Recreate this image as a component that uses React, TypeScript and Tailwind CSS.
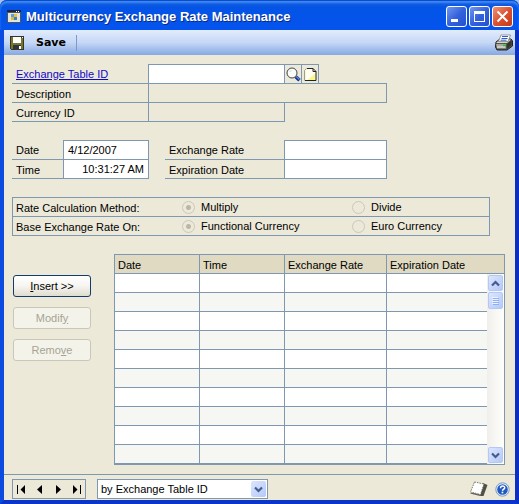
import React from "react";

const line = "border-[#7f98b2]";

function AppIcon() {
  return (
    <svg width="14" height="13" viewBox="0 0 14 13" shapeRendering="crispEdges" aria-hidden="true">
      <rect width="14" height="13" fill="#4a5568" />
      <rect x="1" y="3" width="12" height="9" fill="#e4e4d8" />
      <rect x="0" y="0" width="14" height="2" fill="#1c2440" />
      <rect x="9" y="1" width="1" height="1" fill="#fff" />
      <rect x="11" y="1" width="1" height="1" fill="#fff" />
      <rect x="4" y="4" width="3" height="3" fill="#5aa0d8" />
      <rect x="7" y="4" width="3" height="3" fill="#e8c040" />
      <rect x="4" y="7" width="3" height="3" fill="#d8b840" />
      <rect x="7" y="7" width="3" height="3" fill="#3880c0" />
    </svg>
  );
}

function SaveIcon() {
  return (
    <svg width="14" height="14" viewBox="0 0 14 14" shapeRendering="crispEdges" aria-hidden="true">
      <path d="M0 0h14v14H1L0 13z" fill="#36361c" />
      <path d="M1 1h2v12H1zM11 2h2v11h-2zM2 7h10v2H2z" fill="#75752f" />
      <rect x="3" y="1" width="8" height="6" fill="#fff" />
      <rect x="12" y="1" width="1" height="1" fill="#fff" />
      <rect x="4" y="9" width="7" height="4" fill="#30304a" />
      <rect x="9" y="10" width="2" height="3" fill="#fff" />
    </svg>
  );
}

function PrinterIcon() {
  return (
    <svg width="18" height="17" viewBox="0 0 18 17" aria-hidden="true">
      <path d="M1 8l4-3h11l1.500 2v5L12 16H2l-1.500-3z" fill="#55554f" stroke="#222" />
      <path d="M1 9h11l4-3.500H5z" fill="#d5d5c8" />
      <path d="M1 10h10v4.500H2z" fill="#a8a89c" />
      <path d="M12 10l4.500-3.500V11L12 15z" fill="#33332e" />
      <path d="M6 1h9.500L13 7.500H3.500z" fill="#fff" stroke="#777" strokeWidth=".7" />
      <path d="M7 2.500h6M6.500 4.500h6M5.500 6.200h6" stroke="#315fc4" />
      <path d="M8 11.500h3" stroke="#13c52b" strokeWidth="1.500" />
      <path d="M2 13h8" stroke="#eee" />
    </svg>
  );
}

function LookupIcon() {
  return (
    <svg width="15" height="15" viewBox="0 0 15 15" aria-hidden="true">
      <path d="M9.800 9.800l3.700 3.500" stroke="#12308c" strokeWidth="3.600" />
      <path d="M10.300 9.500l3.200 3" stroke="#5f90e8" strokeWidth="1.200" />
      <circle cx="6" cy="6" r="5" fill="#fbfbf8" stroke="#444" strokeWidth="1" />
      <path d="M3.500 5L5.500 3" stroke="#c8d4e4" />
    </svg>
  );
}

function NoteIcon() {
  return (
    <svg width="13" height="15" viewBox="0 0 13 15" aria-hidden="true">
      <path d="M3.500 1.500H9l3 3v9H1.500V3.500z" fill="#fffef0" />
      <path d="M11.500 6v7.500H3z" fill="#fbf68e" />
      <path d="M.5 13.500v-10l2-2" fill="none" stroke="#a0a088" />
      <path d="M3 1.500h6l3 3v9H1M9 1.500v3h3" fill="none" stroke="#222" strokeWidth="1" />
    </svg>
  );
}

function Chevron({ up = false }: { up?: boolean }) {
  return (
    <svg width="9" height="7" viewBox="0 0 9 7" aria-hidden="true">
      <path d={up ? "M1 5.500L4.500 2L8 5.500" : "M1 1.500L4.500 5L8 1.500"} fill="none" stroke="#445d8c" strokeWidth="2.200" />
    </svg>
  );
}

function NavGlyph({ d }: { d: string }) {
  return (
    <svg width="9" height="9" viewBox="0 0 9 9" aria-hidden="true">
      <path d={d} fill="#000" />
    </svg>
  );
}

const fieldText = "min-w-0 px-1 text-[11px] text-black outline-none";
const labelText = "flex items-center pt-[2px] pl-1";

function WindowButton({ label, close = false, children }: { label: string; close?: boolean; children: React.ReactNode }) {
  return (
    <button
      type="button"
      aria-label={label}
      className={
        "flex size-[21px] items-center justify-center rounded-[3px] border border-white " +
        (close
          ? "bg-linear-to-br from-[#ec9274] via-[#dc5130] to-[#c53a15]"
          : "bg-linear-to-br from-[#7396ee] via-[#3462dd] to-[#2450cf]")
      }
    >
      <svg width="15" height="15" viewBox="0 0 15 15" aria-hidden="true">
        {children}
      </svg>
    </button>
  );
}

function TitleBar() {
  return (
    <header className="flex h-[30px] items-center rounded-t-[7px] bg-linear-to-b from-[#1c62d8] from-0% via-[#0354e6] via-25% to-[#0453ee] pt-[3px] pr-[6px] pl-[7px] shadow-[inset_0_1px_0_#0c4cc8,inset_0_3px_2px_#3c8af8]">
      <AppIcon />
      <h1 className="ml-[5px] flex-1 truncate text-[13px] leading-[18px] font-bold text-white [text-shadow:1px_1px_0_#0b2a80]">
        Multicurrency Exchange Rate Maintenance
      </h1>
      <div className="flex gap-[2px]">
        <WindowButton label="Minimize">
          <rect x="2" y="10" width="7" height="3" fill="#fff" />
        </WindowButton>
        <WindowButton label="Maximize">
          <path d="M2 2h11v11H2zM3 5v7h9V5z" fill="#fff" fillRule="evenodd" />
        </WindowButton>
        <WindowButton label="Close" close>
          <path d="M2.500 2.500l10 10M12.500 2.500l-10 10" stroke="#fff" strokeWidth="2" />
        </WindowButton>
      </div>
    </header>
  );
}

function Toolbar() {
  return (
    <div className="flex h-[25px] items-center bg-linear-to-b from-[#e2ecfc] via-[#c6d8f6] to-[#86a8e2] pr-[2px] pl-[6px]">
      <button type="button" className="flex items-center gap-3 pr-[10px] font-['DejaVu_Sans',sans-serif] text-[11px] font-bold">
        <SaveIcon />
        Save
      </button>
      <span className="h-4 w-px bg-[#7c98cc]" />
      <button type="button" aria-label="Print" className="ml-auto">
        <PrinterIcon />
      </button>
    </div>
  );
}

function TableFields() {
  return (
    <div>
      <div className={`flex h-5 w-[375px] border-b ${line}`}>
        <label htmlFor="tableId" className={`w-[136px] ${labelText}`}>
          <a href="#lookup" className="text-[#1008c8] underline">Exchange Table ID</a>
        </label>
        <input id="tableId" className={`w-[136px] border-t border-l bg-white ${line} ${fieldText}`} />
        <button type="button" aria-label="Look up" className={`flex w-[17px] items-center justify-center border-t border-l ${line}`}>
          <LookupIcon />
        </button>
        <button type="button" aria-label="Note" className={`flex w-[18px] items-center justify-center border-x border-t ${line}`}>
          <NoteIcon />
        </button>
      </div>
      <div className={`flex h-[19px] w-[375px] border-b ${line}`}>
        <label htmlFor="description" className={`w-[136px] ${labelText}`}>Description</label>
        <input id="description" readOnly className={`flex-1 border-x ${line} ${fieldText}`} />
      </div>
      <div className={`flex h-[19px] w-[273px] border-b ${line}`}>
        <label htmlFor="currency" className={`w-[136px] ${labelText}`}>Currency ID</label>
        <input id="currency" readOnly className={`flex-1 border-x ${line} ${fieldText}`} />
      </div>
    </div>
  );
}

function DateFields() {
  return (
    <div className="flex gap-4">
      <div className="w-[137px]">
        <div className={`flex h-5 border-b ${line}`}>
          <label htmlFor="date" className={`w-[51px] ${labelText}`}>Date</label>
          <input id="date" defaultValue="4/12/2007" className={`flex-1 border-x border-t bg-white ${line} ${fieldText}`} />
        </div>
        <div className={`flex h-[19px] border-b ${line}`}>
          <label htmlFor="time" className={`w-[51px] ${labelText}`}>Time</label>
          <input id="time" defaultValue="10:31:27 AM" className={`flex-1 border-x bg-white text-right ${line} ${fieldText}`} />
        </div>
      </div>
      <div className="w-[222px]">
        <div className={`flex h-5 border-b ${line}`}>
          <label htmlFor="rate" className={`w-[119px] ${labelText}`}>Exchange Rate</label>
          <input id="rate" className={`flex-1 border-x border-t bg-white ${line} ${fieldText}`} />
        </div>
        <div className={`flex h-[19px] border-b ${line}`}>
          <label htmlFor="expires" className={`w-[119px] ${labelText}`}>Expiration Date</label>
          <input id="expires" className={`flex-1 border-x bg-white ${line} ${fieldText}`} />
        </div>
      </div>
    </div>
  );
}

function Choice({ name, label, checked = false }: { name: string; label: string; checked?: boolean }) {
  return (
    <label className="flex items-center gap-[6px]">
      <input
        type="radio"
        name={name}
        defaultChecked={checked}
        disabled
        className="size-[13px] appearance-none rounded-full border border-[#cac8bb] checked:bg-[radial-gradient(circle,#b9b7aa_2px,transparent_3px)]"
      />
      {label}
    </label>
  );
}

function RateOptions() {
  const row = "grid grid-cols-[169px_170px_1fr] items-center";
  return (
    <div className={`mr-[15px] border ${line}`}>
      <div role="radiogroup" aria-label="Rate Calculation Method" className={`${row} h-[19px] border-b ${line}`}>
        <span className="pt-[2px] pl-[3px]">Rate Calculation Method:</span>
        <Choice name="method" label="Multiply" checked />
        <Choice name="method" label="Divide" />
      </div>
      <div role="radiogroup" aria-label="Base Exchange Rate On" className={`${row} h-[18px]`}>
        <span className="pt-[2px] pl-[3px]">Base Exchange Rate On:</span>
        <Choice name="base" label="Functional Currency" checked />
        <Choice name="base" label="Euro Currency" />
      </div>
    </div>
  );
}

const scrollButton =
  "flex w-[15px] items-center justify-center rounded-[2px] border border-[#b4c8f6] bg-linear-to-br from-[#dce6fe] to-[#b4c8f8]";

function ScrollBar() {
  return (
    <div className="flex h-[190px] flex-col items-center bg-linear-to-r from-[#f0efeb] to-[#fefefb] py-px">
      <button type="button" aria-label="Scroll up" className={`${scrollButton} h-4`}>
        <Chevron up />
      </button>
      <div className={`${scrollButton} mt-px h-[17px]`}>
        <svg width="7" height="8" viewBox="0 0 7 8" shapeRendering="crispEdges" aria-hidden="true">
          <path d="M0 0h6v1H0zM0 2h6v1H0zM0 4h6v1H0zM0 6h6v1H0z" fill="#eef4fe" />
          <path d="M1 1h6v1H1zM1 3h6v1H1zM1 5h6v1H1zM1 7h6v1H1z" fill="#8cb0f8" />
        </svg>
      </div>
      <button type="button" aria-label="Scroll down" className={`${scrollButton} mt-auto h-4`}>
        <Chevron />
      </button>
    </div>
  );
}

function RateTable() {
  const head = `h-[19px] border-b bg-[#dfdac1] p-0 pt-[2px] pl-[3px] text-left font-normal ${line}`;
  const cell = `h-[19px] border-b p-0 ${line}`;
  return (
    <div className={`flex-1 border ${line}`}>
      <table className="w-full table-fixed border-separate border-spacing-0">
        <colgroup>
          <col className="w-[85px]" />
          <col className="w-[85px]" />
          <col className="w-[102px]" />
          <col />
          <col className="w-[17px]" />
        </colgroup>
        <thead>
          <tr>
            <th className={`${head} border-r`}>Date</th>
            <th className={`${head} border-r`}>Time</th>
            <th className={`${head} border-r`}>Exchange Rate</th>
            <th colSpan={2} className={head}>Expiration Date</th>
          </tr>
        </thead>
        <tbody>
          {Array.from({ length: 10 }, (_, i) => (
            <tr key={i} className="bg-white even:bg-[#f6f6f3]">
              <td className={`${cell} border-r`} />
              <td className={`${cell} border-r`} />
              <td className={`${cell} border-r`} />
              <td className={cell} />
              {i === 0 && (
                <td rowSpan={10} className="p-0 align-top">
                  <ScrollBar />
                </td>
              )}
            </tr>
          ))}
        </tbody>
      </table>
    </div>
  );
}

function Actions() {
  const off = "h-[22px] rounded-[3px] border border-[#c9c7ba] bg-[#f4f3ea] text-[#a5a394]";
  return (
    <div className="ml-px flex w-[78px] flex-col gap-[10px] pt-[21px]">
      <button
        type="button"
        className="h-[22px] rounded-[3px] border border-[#123c6c] bg-linear-to-b from-white via-[#f6f5f0] to-[#dfdccf]"
      >
        <u>I</u>nsert &gt;&gt;
      </button>
      <button type="button" disabled className={off}>
        Modif<u>y</u>
      </button>
      <button type="button" disabled className={off}>
        Remo<u>v</u>e
      </button>
    </div>
  );
}

function StatusBar() {
  return (
    <footer className={`flex items-center border-t pt-1 pr-[5px] pb-px pl-2 ${line}`}>
      <nav aria-label="Records" className={`flex h-5 w-[74px] items-center justify-between border px-1 ${line}`}>
        <button type="button" aria-label="First record"><NavGlyph d="M0 0h1v9H0zM8 0v9L3.500 4.500z" /></button>
        <button type="button" aria-label="Previous record"><NavGlyph d="M7 0v9L2 4.500z" /></button>
        <button type="button" aria-label="Next record"><NavGlyph d="M2 0v9L7 4.500z" /></button>
        <button type="button" aria-label="Last record"><NavGlyph d="M8 0h1v9H8zM1 0v9L5.500 4.500z" /></button>
      </nav>
      <div className="relative ml-[11px]">
        <select aria-label="Sort order" className={`block h-5 w-[171px] appearance-none border bg-white pl-[3px] text-[11px] ${line}`}>
          <option>by Exchange Table ID</option>
        </select>
        <span className="pointer-events-none absolute inset-y-[2px] right-[2px] flex w-[15px] items-center justify-center rounded-[2px] bg-linear-to-br from-[#dce6fe] to-[#b4c8f8]">
          <Chevron />
        </span>
      </div>
      <button type="button" aria-label="Window note" className="ml-auto">
        <svg width="19" height="16" viewBox="0 0 19 16" aria-hidden="true">
          <path d="M14 2l4.500 2-4 11H11z" fill="#505044" />
          <path d="M1 12.500l10 2.500 1-1.500-9-2z" fill="#66665a" />
          <path d="M5.500 1L15 3l-3.500 10.500L1.500 11z" fill="#fff" stroke="#66665a" strokeWidth=".9" strokeDasharray="1.500 1" />
        </svg>
      </button>
      <button type="button" aria-label="Help" className="ml-[7px]">
        <svg width="15" height="15" viewBox="0 0 15 15" aria-hidden="true">
          <circle cx="7.500" cy="7.500" r="6.700" fill="#e8f0fc" stroke="#7898cc" />
          <circle cx="7.500" cy="7.500" r="5.300" fill="#1f59bd" />
          <path d="M5.500 6.200c0-3 4.500-2.600 4.200-.4-.2 1.300-2 1.300-2.200 3" fill="none" stroke="#fff" strokeWidth="1.500" />
          <rect x="6.600" y="9.700" width="1.700" height="1.600" fill="#fff" />
        </svg>
      </button>
    </footer>
  );
}

export default function App() {
  return (
    <div className="min-h-screen bg-[#a9c0ea] font-['Liberation_Sans',Arial,sans-serif] text-[11px] leading-[13px] text-black">
      <div className="flex min-h-screen flex-col rounded-t-[7px] bg-[#0a45dc]">
        <TitleBar />
        <div className="flex flex-1 flex-col border-x-4 border-b-4 border-t-0 border-r-[#0b2fc0] border-b-[#0b35c8] border-l-[#0b4be0] bg-[#ece9d8]">
          <Toolbar />
          <main className="flex flex-1 flex-col gap-[18px] py-[9px] pr-[10px] pl-2">
            <TableFields />
            <DateFields />
            <RateOptions />
            <div className="flex gap-[23px]">
              <Actions />
              <RateTable />
            </div>
          </main>
          <StatusBar />
        </div>
      </div>
    </div>
  );
}
